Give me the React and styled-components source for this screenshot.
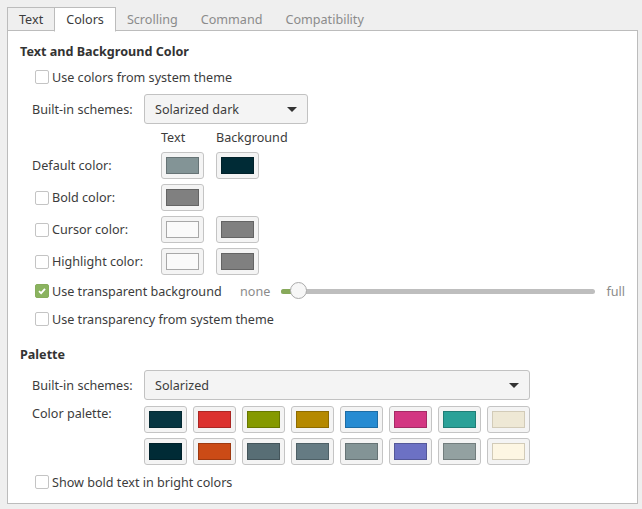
import React from "react";
import styled, { createGlobalStyle } from "styled-components";

const Global = createGlobalStyle`
  html, body {
    margin: 0;
    background: #efefef;
  }
  body {
    font-family: "Noto Sans", "Open Sans", sans-serif;
    font-size: 12.6px;
    color: #3c3c3c;
  }
`;

const Window = styled.div`
  width: 642px;
  height: 509px;
  box-sizing: border-box;
  padding: 7px 4px 5px 7px;
  display: flex;
  flex-direction: column;
`;

const TabBar = styled.div`
  display: flex;
  height: 24px;
  margin-bottom: -1px;
  position: relative;
  z-index: 1;
`;

const Tab = styled.div`
  display: flex;
  align-items: center;
  padding: 1px 11px 0 11px;
  box-sizing: border-box;
  border: 1px solid ${(p) => (p.$framed ? "#bcbcbc" : "transparent")};
  border-bottom-color: ${(p) => (p.$active ? "#fff" : p.$framed ? "#bcbcbc" : "transparent")};
  margin-left: ${(p) => (p.$first ? "0" : "-1px")};
  background: ${(p) => (p.$active ? "#fff" : "transparent")};
  color: ${(p) => (p.$active || p.$framed ? "#3c3c3c" : "#8b8b8b")};
  height: ${(p) => (p.$active ? "25px" : "24px")};
  padding-bottom: ${(p) => (p.$active ? "1px" : "0")};
`;

const Panel = styled.div`
  flex: 1;
  background: #fff;
  border: 1px solid #bcbcbc;
  padding: 12px 12px 0 12px;
  display: flex;
  flex-direction: column;
`;

const Title = styled.div`
  font-weight: bold;
  color: #333;
  height: 18px;
  line-height: 18px;
  margin-top: ${(p) => p.$top || 0}px;
`;

const Indent = styled.div`
  padding-left: 12px;
  display: flex;
  flex-direction: column;
`;

const CheckRow = styled.label`
  display: flex;
  align-items: center;
  height: 18px;
  padding-left: 3px;
  gap: 3px;
  margin-top: ${(p) => p.$top || 0}px;
`;

const Box = styled.span`
  width: 14px;
  height: 14px;
  box-sizing: border-box;
  border-radius: 2px;
  border: 1px solid ${(p) => (p.$checked ? "#87ad5b" : "#c4c4c4")};
  background: ${(p) => (p.$checked ? "#8ab35f" : "#fff")};
  display: inline-flex;
  align-items: center;
  justify-content: center;
  flex: 0 0 auto;
`;

const SchemeRow = styled.div`
  display: flex;
  align-items: center;
  margin-top: ${(p) => p.$top || 0}px;
`;

const RowLabel = styled.div`
  width: 112px;
  flex: 0 0 auto;
`;

const Dropdown = styled.div`
  width: ${(p) => p.$width}px;
  height: 30px;
  box-sizing: border-box;
  border: 1px solid #c2c2c2;
  border-radius: 3px;
  background: #f4f4f4;
  display: flex;
  align-items: center;
  justify-content: space-between;
  padding: 0 10px 0 10px;
`;

const Arrow = styled.span`
  width: 0;
  height: 0;
  border-left: 5px solid transparent;
  border-right: 5px solid transparent;
  border-top: 5px solid #333;
`;

const ColorGrid = styled.div`
  display: grid;
  grid-template-columns: 117px 43px 43px;
  column-gap: 12px;
  row-gap: 5px;
  align-items: center;
  margin-top: 5px;
`;

const Header = styled.div`
  height: 18px;
  line-height: 18px;
  grid-column: ${(p) => p.$col};
`;

const ColorLabel = styled.div`
  grid-column: 1;
  display: flex;
  align-items: center;
  gap: 3px;
  padding-left: ${(p) => (p.$check ? "3px" : "0")};
`;

const ColorButton = styled.div`
  width: 43px;
  height: 27px;
  box-sizing: border-box;
  border: 1px solid #c4c4c4;
  border-radius: 3px;
  background: #f4f4f4;
  padding: 4px;
  display: flex;
  grid-column: ${(p) => p.$col || "auto"};
`;

const Swatch = styled.div`
  flex: 1;
  background: ${(p) => p.$color};
  box-shadow: inset 0 0 0 1px ${(p) => p.$edge || "rgba(0,0,0,0.22)"};
`;

const SliderRow = styled.div`
  display: flex;
  align-items: center;
  height: 18px;
  margin-top: 7px;
`;

const SliderLabel = styled(CheckRow)`
  width: 208px;
  flex: 0 0 auto;
  box-sizing: border-box;
`;

const Hint = styled.span`
  color: #8b8b8b;
`;

const Track = styled.div`
  flex: 1;
  height: 5px;
  border-radius: 3px;
  background: #bebebe;
  margin: 0 11px 0 11px;
  position: relative;
`;

const Fill = styled.div`
  height: 100%;
  width: 14px;
  border-radius: 3px;
  background: #87a95a;
`;

const Knob = styled.div`
  position: absolute;
  left: 9px;
  top: 50%;
  width: 17px;
  height: 17px;
  margin-top: -9px;
  box-sizing: border-box;
  border-radius: 50%;
  background: #f7f7f7;
  border: 1px solid #ababab;
`;

const PaletteArea = styled.div`
  display: flex;
  margin-top: 6px;
`;

const PaletteLabel = styled.div`
  width: 112px;
  flex: 0 0 auto;
  line-height: 18px;
  margin-top: -1px;
`;

const SwatchGrid = styled.div`
  display: grid;
  grid-template-columns: repeat(8, 43px);
  column-gap: 6px;
  row-gap: 5px;
`;

const Check = () => (
  <svg width="10" height="10" viewBox="0 0 10 10">
    <path d="M2 5.2 L4.1 7.2 L8 2.8" fill="none" stroke="#fff" strokeWidth="1.8" />
  </svg>
);

const tabs = ["Text", "Colors", "Scrolling", "Command", "Compatibility"];

const palette = [
  ["#073642", "#dc322f", "#859900", "#b58900", "#268bd2", "#d33682", "#2aa198", "#eee8d5"],
  ["#002b36", "#cb4b16", "#586e75", "#657b83", "#839496", "#6c71c4", "#93a1a1", "#fdf6e3"],
];

const light = (c) => ["#eee8d5", "#fdf6e3", "#fafafa"].includes(c);

export default function App() {
  return (
    <Window>
      <Global />
      <TabBar>
        {tabs.map((t, i) => (
          <Tab key={t} $first={i === 0} $active={i === 1} $framed={i < 2}>
            {t}
          </Tab>
        ))}
      </TabBar>
      <Panel>
        <Title>Text and Background Color</Title>
        <Indent>
          <CheckRow $top={7}>
            <Box />
            Use colors from system theme
          </CheckRow>
          <SchemeRow $top={8}>
            <RowLabel>Built-in schemes:</RowLabel>
            <Dropdown $width={164}>
              Solarized dark
              <Arrow />
            </Dropdown>
          </SchemeRow>
          <ColorGrid>
            <Header $col={2}>Text</Header>
            <Header $col={3}>Background</Header>
            <ColorLabel>Default color:</ColorLabel>
            <ColorButton><Swatch $color="#839496" /></ColorButton>
            <ColorButton><Swatch $color="#002b36" /></ColorButton>
            <ColorLabel $check><Box />Bold color:</ColorLabel>
            <ColorButton $col={2}><Swatch $color="#808080" /></ColorButton>
            <ColorLabel $check><Box />Cursor color:</ColorLabel>
            <ColorButton><Swatch $color="#fafafa" $edge="#a8a8a8" /></ColorButton>
            <ColorButton><Swatch $color="#808080" /></ColorButton>
            <ColorLabel $check><Box />Highlight color:</ColorLabel>
            <ColorButton><Swatch $color="#fafafa" $edge="#a8a8a8" /></ColorButton>
            <ColorButton><Swatch $color="#808080" /></ColorButton>
          </ColorGrid>
          <SliderRow>
            <SliderLabel>
              <Box $checked><Check /></Box>
              Use transparent background
            </SliderLabel>
            <Hint>none</Hint>
            <Track>
              <Fill />
              <Knob />
            </Track>
            <Hint>full</Hint>
          </SliderRow>
          <CheckRow $top={10}>
            <Box />
            Use transparency from system theme
          </CheckRow>
        </Indent>
        <Title $top={18}>Palette</Title>
        <Indent>
          <SchemeRow $top={6}>
            <RowLabel>Built-in schemes:</RowLabel>
            <Dropdown $width={386}>
              Solarized
              <Arrow />
            </Dropdown>
          </SchemeRow>
          <PaletteArea>
            <PaletteLabel>Color palette:</PaletteLabel>
            <SwatchGrid>
              {palette.flat().map((c, i) => (
                <ColorButton key={i}>
                  <Swatch $color={c} $edge={light(c) ? "#d2cbb8" : undefined} />
                </ColorButton>
              ))}
            </SwatchGrid>
          </PaletteArea>
          <CheckRow $top={8}>
            <Box />
            Show bold text in bright colors
          </CheckRow>
        </Indent>
      </Panel>
    </Window>
  );
}
